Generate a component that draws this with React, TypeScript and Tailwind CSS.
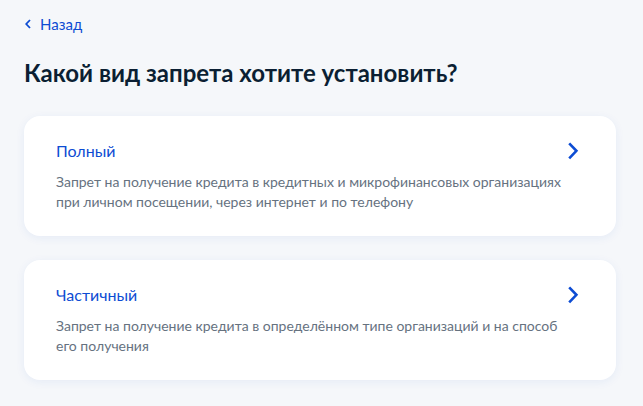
type Option = {
  title: string;
  text: string;
};

const options: Option[] = [
  {
    title: "Полный",
    text: "Запрет на получение кредита в кредитных и микрофинансовых организациях при личном посещении, через интернет и по телефону",
  },
  {
    title: "Частичный",
    text: "Запрет на получение кредита в определённом типе организаций и на способ его получения",
  },
];

function ChevronRight() {
  return (
    <svg viewBox="0 0 20 20" className="h-5 w-5 shrink-0" fill="none">
      <path d="M5.2 2.3L12.4 9.8L5.2 17.3" stroke="#0d4cd3" strokeWidth="2.6" />
    </svg>
  );
}

function BackChevron() {
  return (
    <svg viewBox="0 0 6 10" className="ml-[1px] h-[10px] w-[6px]" fill="none">
      <path d="M5 1L1.2 5L5 9" stroke="#0d4cd3" strokeWidth="1.8" />
    </svg>
  );
}

export default function App() {
  return (
    <div
      className="min-h-[406px] bg-[#f5f7fa] pl-6 pr-[27px] pt-[14px] pb-6 text-[#0b1f33]"
      style={{ fontFamily: "Lato, 'Noto Sans', sans-serif" }}
    >
      <a href="#" className="flex items-center gap-[9px] text-[15px] leading-5 text-[#0d4cd3]">
        <BackChevron />
        Назад
      </a>

      <h1 className="mt-[23px] text-[24px] font-bold leading-8">
        Какой вид запрета хотите установить?
      </h1>

      <div className="mt-[27px] flex flex-col gap-6">
        {options.map((option) => (
          <button
            key={option.title}
            className="w-full rounded-2xl bg-white px-8 pt-[25px] pb-6 text-left shadow-[0_2px_10px_rgba(29,90,200,0.07)]"
          >
            <div className="flex h-5 items-center justify-between gap-4">
              <p className="text-base leading-5 text-[#0d4cd3]">{option.title}</p>
              <ChevronRight />
            </div>
            <p className="mt-[11px] max-w-[512px] text-sm leading-5 text-[#66727f]">
              {option.text}
            </p>
          </button>
        ))}
      </div>
    </div>
  );
}
